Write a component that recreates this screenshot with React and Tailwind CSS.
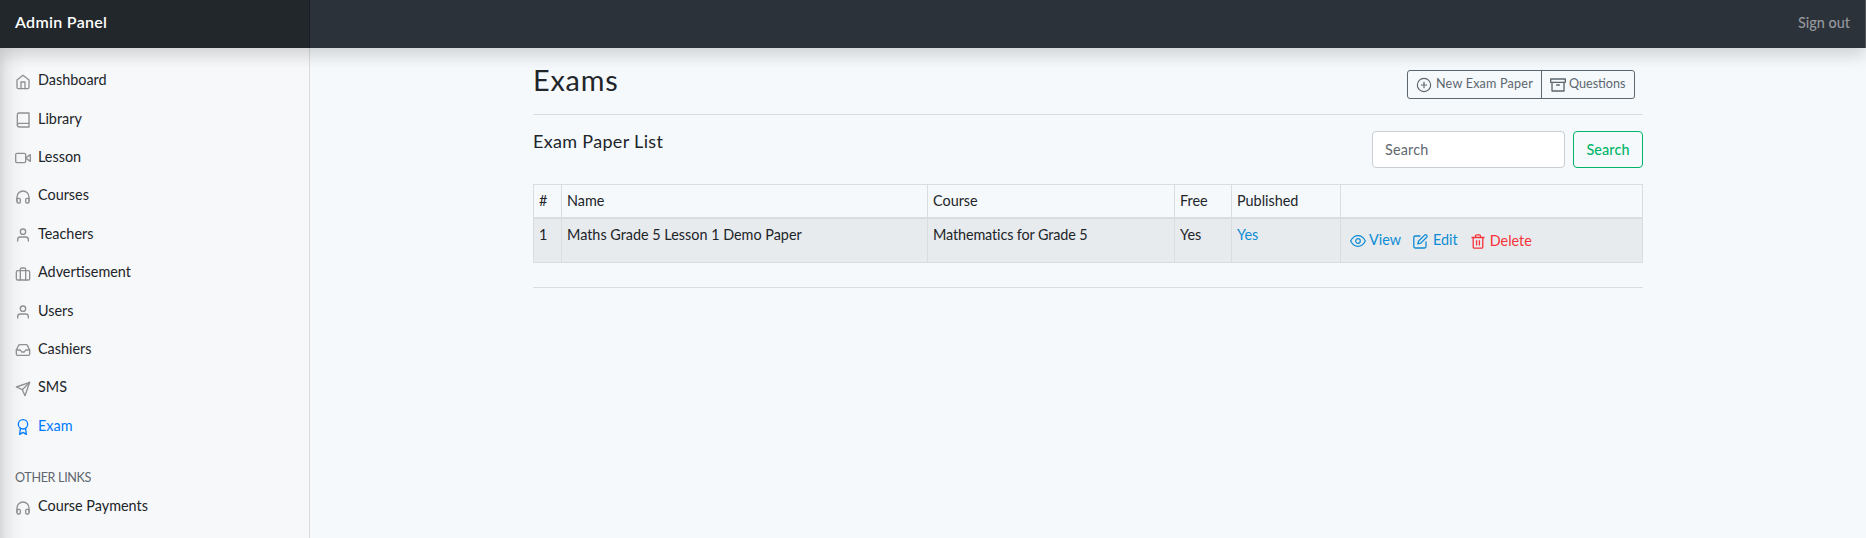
import { FiHome, FiVideo, FiHeadphones, FiUser, FiBriefcase, FiInbox, FiSend, FiAward, FiPlusCircle, FiArchive } from 'react-icons/fi';

function BookIcon({ className }) {
  return (
    <svg className={className} viewBox="0 0 24 24" width="16" height="16" fill="none" stroke="currentColor" strokeWidth="2" strokeLinecap="round" strokeLinejoin="round">
      <path d="M3.500 19.500A2.500 2.500 0 0 1 6 17H21" />
      <path d="M6 1.500H21v21H6A2.500 2.500 0 0 1 3.500 20V4A2.500 2.500 0 0 1 6 1.500z" />
    </svg>
  );
}

function EyeIcon() {
  return (
    <svg viewBox="0 0 16 12" width="16" height="12" fill="none" stroke="currentColor" strokeWidth="1.2">
      <path d="M.6 6C2.600 2.300 5.200.7 8 .7S13.400 2.300 15.400 6C13.400 9.700 10.800 11.300 8 11.300S2.600 9.700.6 6z" />
      <circle cx="8" cy="6" r="2.300" />
    </svg>
  );
}

function EditIcon() {
  return (
    <svg viewBox="0 0 15 15" width="15" height="15" fill="none" stroke="currentColor" strokeWidth="1.300" strokeLinecap="round" strokeLinejoin="round">
      <path d="M7 2H2.200A1.400 1.400 0 0 0 .8 3.400v9.200A1.400 1.400 0 0 0 2.200 14h9.400a1.400 1.400 0 0 0 1.400-1.400V8" />
      <path d="M11.600 1.100a1.250 1.250 0 0 1 1.800 0l.3.3a1.250 1.250 0 0 1 0 1.800L7.800 9.100l-3 .9.900-3z" />
    </svg>
  );
}

function TrashIcon() {
  return (
    <svg viewBox="0 0 14 15" width="14" height="15" fill="none" stroke="currentColor" strokeWidth="1.300">
      <path d="M.5 3.500h13M2.200 3.500v9.500q0 1.200 1.200 1.200h7.200q1.200 0 1.200-1.200V3.500M4.500 3.200V2q0-1.200 1.200-1.200h2.600q1.200 0 1.200 1.200v1.200M5.600 6.200v5.300M8.400 6.200v5.300" />
    </svg>
  );
}

const links = [
  ['Dashboard', FiHome],
  ['Library', BookIcon],
  ['Lesson', FiVideo],
  ['Courses', FiHeadphones],
  ['Teachers', FiUser],
  ['Advertisement', FiBriefcase],
  ['Users', FiUser],
  ['Cashiers', FiInbox],
  ['SMS', FiSend],
  ['Exam', FiAward],
];

function NavItem({ label, Icon, active }) {
  return (
    <li className={active ? 'text-[#007bff]' : 'text-[#212529]'}>
      <a className="flex h-[38.4px] items-center gap-[7px] pl-[15px] text-[14.4px]">
        <Icon className={active ? 'mt-[3px] size-4' : 'mt-[3px] size-4 text-[#8f9091]'} />
        <span className="pb-px">{label}</span>
      </a>
    </li>
  );
}

const cell = 'border border-[#d9dde0] px-[5px] text-left align-top font-normal';

export default function App() {
  return (
    <div className="flex h-[538px] w-full flex-col overflow-hidden bg-[#f5f9fc] font-['Lato','Open_Sans',sans-serif] text-[14.4px] leading-[23px] text-[#212529]">
      <header className="relative z-10 flex h-12 shrink-0 items-center justify-between border-r border-[#50565c] bg-[#2c323a] shadow-[0_8px_16px_rgba(0,0,0,0.15)]">
        <div className="flex h-full w-[310px] items-center border-r border-[#1b1f23] bg-[#22272b] pb-1.5 pl-[15px] text-[16px] font-semibold tracking-[0.3px] text-white">Admin Panel</div>
        <a className="pr-[15px] pb-1 text-[14.4px] font-medium text-[#96999d]">Sign out</a>
      </header>
      <div className="flex min-h-0 flex-1">
        <nav className="w-[310px] shrink-0 border-r border-[#d9dde0] bg-[linear-gradient(to_right,#d7d8da_0px,#e6e7e9_6px,#f1f2f4_14px,#f7f8fa_26px)] pt-[13px]">
          <ul>
            {links.map(([label, Icon]) => <NavItem key={label} label={label} Icon={Icon} active={label === 'Exam'} />)}
          </ul>
          <h6 className="mt-[25px] pl-[15px] text-[12.6px] leading-[15px] tracking-[-0.35px] text-[#5f676e] uppercase">Other links</h6>
          <ul className="mt-[2px]">
            <NavItem label="Course Payments" Icon={FiHeadphones} />
          </ul>
        </nav>
        <main className="ml-[223px] w-[1110px] shrink-0">
          <div className="flex h-[67px] items-start justify-between border-b border-[#d9dde0] pt-[15px] pr-2">
            <h1 className="text-[28.8px] leading-[34px] tracking-[0.8px]">Exams</h1>
            <div className="mt-[7px] flex h-[29px] rounded-[3px] border border-[#5c666e] text-[12.6px] text-[#5c666e]">
              <button className="flex w-[134px] items-center gap-1 border-r border-[#5c666e] pl-2 tracking-[0.2px]">
                <FiPlusCircle className="size-4" strokeWidth={1.7} />
                <span className="pb-0.5">New Exam Paper</span>
              </button>
              <button className="flex w-[92px] items-center gap-[3px] pl-2">
                <FiArchive className="size-4" strokeWidth={2} />
                <span className="pb-0.5">Questions</span>
              </button>
            </div>
          </div>
          <div className="flex h-[69px] justify-between pt-4">
            <h2 className="text-[18px] leading-[20px] tracking-[0.32px]">Exam Paper List</h2>
            <div className="flex h-[37px] gap-2">
              <input className="w-[193px] rounded-[4px] border border-[#c8ced4] bg-white pl-3 tracking-[0.2px] outline-none placeholder:text-[#5f676e]" placeholder="Search" />
              <button className="w-[70px] rounded-[4px] border border-[#00b569] pb-px font-medium tracking-[0.1px] text-[#00b569]">Search</button>
            </div>
          </div>
          <table className="w-full table-fixed border-collapse">
            <colgroup>
              <col className="w-[28px]" />
              <col className="w-[366px]" />
              <col className="w-[247px]" />
              <col className="w-[57px]" />
              <col className="w-[109px]" />
              <col />
            </colgroup>
            <thead>
              <tr className="h-[33px] border-b-2 border-[#d9dde0]">
                <th className={cell + ' pt-1'}>#</th>
                <th className={cell + ' pt-1'}>Name</th>
                <th className={cell + ' pt-1'}>Course</th>
                <th className={cell + ' pt-1'}>Free</th>
                <th className={cell + ' pt-1'}>Published</th>
                <th className={cell}></th>
              </tr>
            </thead>
            <tbody>
              <tr className="h-[45px] bg-[#e8ebee]">
                <td className={cell + ' pt-1'}>1</td>
                <td className={cell + ' pt-1'}>Maths Grade 5 Lesson 1 Demo Paper</td>
                <td className={cell + ' pt-1 tracking-[-0.12px]'}>Mathematics for Grade 5</td>
                <td className={cell + ' pt-1'}>Yes</td>
                <td className={cell + ' pt-1 text-[#0d8bd4]'}>Yes</td>
                <td className={cell}>
                  <div className="flex items-center pt-[9px] pl-1 text-[#0d8bd4]">
                    <a className="flex items-center gap-[3px]"><span className="pt-[3px]"><EyeIcon /></span>View</a>
                    <a className="ml-3 flex items-center gap-[5px]"><span className="pt-[3px]"><EditIcon /></span>Edit</a>
                    <a className="ml-[13px] flex items-center gap-[5px] pt-px text-[#f5333a]"><span className="pt-[3px]"><TrashIcon /></span>Delete</a>
                  </div>
                </td>
              </tr>
            </tbody>
          </table>
          <hr className="mt-6 border-[#d9dde0]" />
        </main>
      </div>
    </div>
  );
}
